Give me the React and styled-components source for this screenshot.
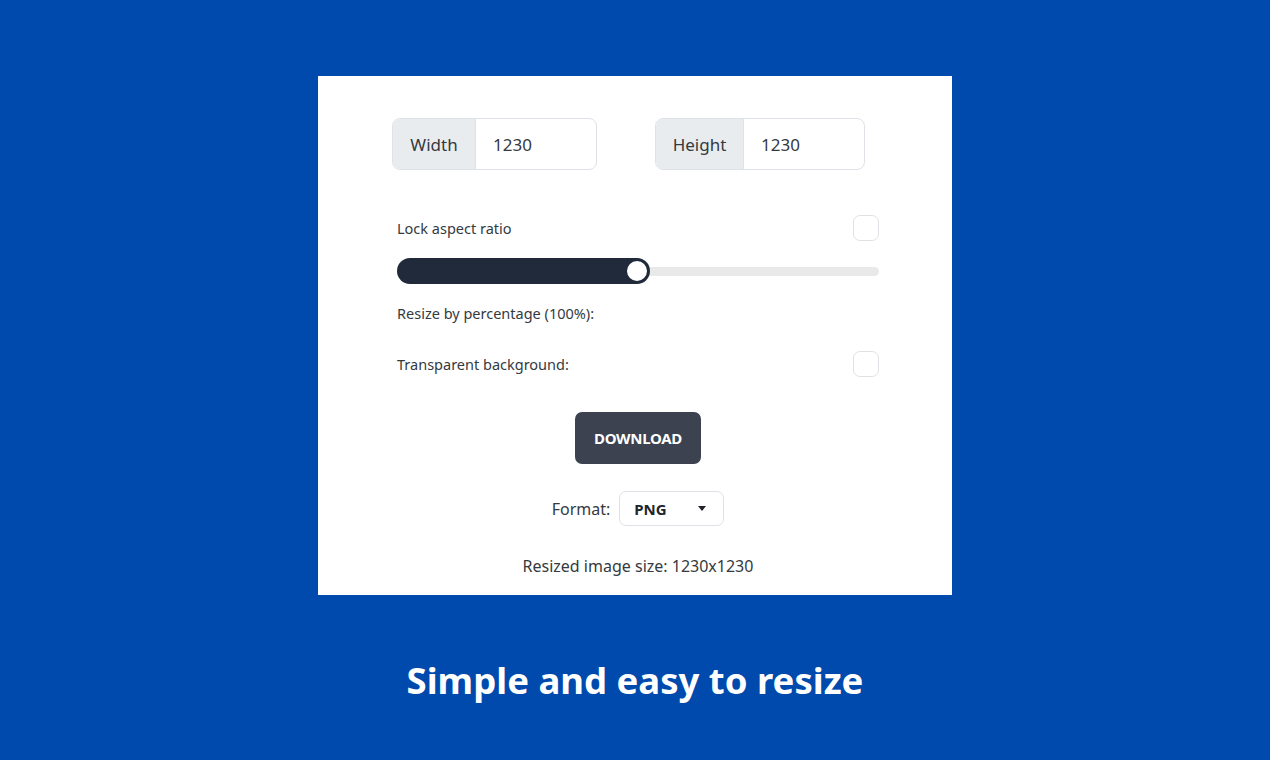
import React from 'react'
import styled, { createGlobalStyle } from 'styled-components'

const Global = createGlobalStyle`
  html, body {
    margin: 0;
    padding: 0;
    background: #004aad;
  }
  body {
    font-family: "Noto Sans", "Open Sans", sans-serif;
  }
`

export default function App() {
  const percent = 52.5
  return (
    <Page>
      <Global />
      <Card>
        <InputsRow>
          <InputGroup width={205}>
            <Addon width={82}>Width</Addon>
            <Field>1230</Field>
          </InputGroup>
          <InputGroup width={210}>
            <Addon width={87}>Height</Addon>
            <Field>1230</Field>
          </InputGroup>
        </InputsRow>

        <OptionRow top={45}>
          <Label>Lock aspect ratio</Label>
          <Check />
        </OptionRow>

        <Slider>
          <Track />
          <Fill style={{ width: `${percent}%` }}>
            <Thumb />
          </Fill>
        </Slider>

        <Label as="div" style={{ marginTop: 19 }}>Resize by percentage (100%):</Label>

        <OptionRow top={28}>
          <Label>Transparent background:</Label>
          <Check />
        </OptionRow>

        <Center top={35}>
          <DownloadButton>DOWNLOAD</DownloadButton>
        </Center>

        <Center top={27}>
          <FormatLabel>Format:</FormatLabel>
          <Select>
            <span>PNG</span>
            <Caret />
          </Select>
        </Center>

        <Result>Resized image size: 1230x1230</Result>
      </Card>
      <Title>Simple and easy to resize</Title>
    </Page>
  )
}

const Page = styled.div`
  height: 760px;
  display: flex;
  flex-direction: column;
  align-items: center;
  padding-top: 76px;
  box-sizing: border-box;
`

const Card = styled.div`
  width: 634px;
  box-sizing: border-box;
  background: #fff;
  padding: 42px 73px 19px 79px;
  display: flex;
  flex-direction: column;
  color: #212529;
`

const InputsRow = styled.div`
  display: flex;
  gap: 58px;
  margin-left: -5px;
`

const InputGroup = styled.div`
  width: ${p => p.width}px;
  height: 52px;
  box-sizing: border-box;
  border: 1px solid #dee2e6;
  border-radius: 8px;
  display: flex;
  overflow: hidden;
  font-size: 17px;
`

const Addon = styled.div`
  width: ${p => p.width}px;
  background: #e9ecef;
  border-right: 1px solid #dee2e6;
  display: flex;
  align-items: center;
  justify-content: center;
  color: #343a40;
`

const Field = styled.div`
  flex: 1;
  display: flex;
  align-items: center;
  padding-left: 17px;
  color: #343a40;
`

const OptionRow = styled.div`
  margin-top: ${p => p.top}px;
  height: 26px;
  display: flex;
  align-items: center;
  justify-content: space-between;
`

const Label = styled.span`
  font-size: 14.5px;
  line-height: 20px;
  color: #343a40;
`

const Check = styled.div`
  width: 26px;
  height: 26px;
  box-sizing: border-box;
  border: 1px solid #dee2e6;
  border-radius: 7px;
  background: #fff;
`

const Slider = styled.div`
  position: relative;
  margin-top: 17px;
  height: 26px;
  display: flex;
  align-items: center;
`

const Track = styled.div`
  width: 100%;
  height: 9px;
  border-radius: 5px;
  background: #e9e9e9;
`

const Fill = styled.div`
  position: absolute;
  left: 0;
  top: 0;
  height: 26px;
  border-radius: 13px;
  background: #202a3a;
`

const Thumb = styled.div`
  position: absolute;
  right: 1px;
  top: 1px;
  width: 24px;
  height: 24px;
  box-sizing: border-box;
  border-radius: 50%;
  background: #fff;
  border: 2.5px solid #202a3a;
`

const Center = styled.div`
  margin-top: ${p => p.top}px;
  display: flex;
  justify-content: center;
  align-items: center;
`

const DownloadButton = styled.button`
  width: 126px;
  height: 52px;
  border: none;
  border-radius: 7px;
  background: #3c4250;
  color: #fff;
  font-family: inherit;
  font-weight: 700;
  font-size: 15px;
  letter-spacing: -0.3px;
`

const FormatLabel = styled.span`
  font-size: 16px;
  color: #343a40;
  margin-right: 9px;
`

const Select = styled.div`
  width: 105px;
  height: 35px;
  box-sizing: border-box;
  border: 1px solid #dee2e6;
  border-radius: 7px;
  display: flex;
  align-items: center;
  justify-content: space-between;
  padding: 0 17px 0 14px;
  font-size: 15px;
  font-weight: 700;
  color: #212529;
`

const Caret = styled.span`
  width: 0;
  height: 0;
  border-left: 4.5px solid transparent;
  border-right: 4.5px solid transparent;
  border-top: 5px solid #212529;
`

const Result = styled.div`
  margin-top: 30px;
  text-align: center;
  font-size: 16px;
  line-height: 20px;
  color: #343a40;
`

const Title = styled.h1`
  margin: 61px 0 0;
  color: #fff;
  font-size: 36.5px;
  font-weight: 700;
  line-height: 48px;
`
